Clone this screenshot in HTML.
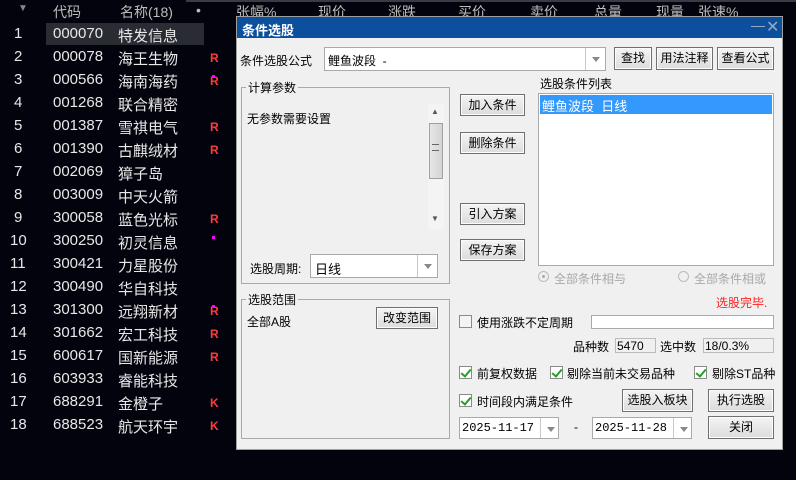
<!DOCTYPE html>
<html><head><meta charset="utf-8"><style>
*{margin:0;padding:0;box-sizing:border-box}
body{width:796px;height:480px;background:#03030d;font-family:"Liberation Sans","Noto Sans CJK SC",sans-serif;font-size:13px;position:relative;overflow:hidden;color:#e6e6e6}
.a{position:absolute;white-space:nowrap}
.hd{color:#bdbdbd;font-size:14px}
.row{position:absolute;left:0;width:236px;height:23px;font-size:15px;color:#e8e8e8}
.row span{position:absolute;top:2px}
.mk{color:#ff3b3b;font-weight:bold;font-size:12px;top:5px!important;left:210px}
.dlg{position:absolute;left:236px;top:16px;width:547px;height:434px;background:#f0f0f0;border:1px solid #a0a0a0;color:#000;font-size:12px}
.btn{position:absolute;border:1px solid #707070;background:linear-gradient(#f4f4f4,#dcdcdc);text-align:center;font-size:12px;color:#000;box-shadow:inset 0 0 0 1px #fcfcfc}
.box{position:absolute;background:#fff;border:1px solid #a9a9a9}
.grp{position:absolute;border:1px solid #a9a9a9}
.lg{position:absolute;background:#f0f0f0;padding:0 2px;top:-9px;left:4px}
.dd{position:absolute;right:0;top:0;bottom:0;width:20px;border-left:1px solid #c8c8c8}
.dd:after{content:"";position:absolute;left:6px;top:9px;border:4px solid transparent;border-top:5px solid #888}
.cb{position:absolute;width:13px;height:13px;border:1px solid #8a8a8a;background:#fff}
.cb.k:after{content:"";position:absolute;left:3px;top:0px;width:4px;height:8px;border:solid #21a121;border-width:0 2px 2px 0;transform:rotate(40deg)}
</style></head><body>
<div class="a" style="left:186px;top:0;width:610px;height:2px;background:#3a3a44"></div>
<div class="a hd" style="left:0;top:3px;width:46px;text-align:center;font-size:10px;color:#888">▼</div>
<div class="a hd" style="left:53px;top:2px">代码</div>
<div class="a hd" style="left:120px;top:2px">名称(18)</div>
<div class="a hd" style="left:196px;top:2px">•</div>
<div class="a hd" style="left:236px;top:2px">张幅%</div>
<div class="a hd" style="left:318px;top:2px">现价</div>
<div class="a hd" style="left:388px;top:2px">涨跌</div>
<div class="a hd" style="left:458px;top:2px">买价</div>
<div class="a hd" style="left:530px;top:2px">卖价</div>
<div class="a hd" style="left:594px;top:2px">总量</div>
<div class="a hd" style="left:656px;top:2px">现量</div>
<div class="a hd" style="left:698px;top:2px">张速%</div>
<div class="a" style="left:46px;top:23px;width:158px;height:22px;background:#2a2c33"></div>
<div class="row" style="top:23px"><span style="left:14px">1</span><span style="left:53px">000070</span><span style="left:118px">特发信息</span></div>
<div class="row" style="top:46px"><span style="left:14px">2</span><span style="left:53px">000078</span><span style="left:118px">海王生物</span><span class="mk">R</span></div>
<div class="row" style="top:69px"><span style="left:14px">3</span><span style="left:53px">000566</span><span style="left:118px">海南海药</span><span class="mk">R</span><span style="left:212px;top:6px;width:3px;height:3px;background:#f0f"></span></div>
<div class="row" style="top:92px"><span style="left:14px">4</span><span style="left:53px">001268</span><span style="left:118px">联合精密</span></div>
<div class="row" style="top:115px"><span style="left:14px">5</span><span style="left:53px">001387</span><span style="left:118px">雪祺电气</span><span class="mk">R</span></div>
<div class="row" style="top:138px"><span style="left:14px">6</span><span style="left:53px">001390</span><span style="left:118px">古麒绒材</span><span class="mk">R</span></div>
<div class="row" style="top:161px"><span style="left:14px">7</span><span style="left:53px">002069</span><span style="left:118px">獐子岛</span></div>
<div class="row" style="top:184px"><span style="left:14px">8</span><span style="left:53px">003009</span><span style="left:118px">中天火箭</span></div>
<div class="row" style="top:207px"><span style="left:14px">9</span><span style="left:53px">300058</span><span style="left:118px">蓝色光标</span><span class="mk">R</span></div>
<div class="row" style="top:230px"><span style="left:10px">10</span><span style="left:53px">300250</span><span style="left:118px">初灵信息</span><span style="left:212px;top:6px;width:3px;height:3px;background:#f0f"></span></div>
<div class="row" style="top:253px"><span style="left:10px">11</span><span style="left:53px">300421</span><span style="left:118px">力星股份</span></div>
<div class="row" style="top:276px"><span style="left:10px">12</span><span style="left:53px">300490</span><span style="left:118px">华自科技</span></div>
<div class="row" style="top:299px"><span style="left:10px">13</span><span style="left:53px">301300</span><span style="left:118px">远翔新材</span><span class="mk">R</span><span style="left:212px;top:6px;width:3px;height:3px;background:#f0f"></span></div>
<div class="row" style="top:322px"><span style="left:10px">14</span><span style="left:53px">301662</span><span style="left:118px">宏工科技</span><span class="mk">R</span></div>
<div class="row" style="top:345px"><span style="left:10px">15</span><span style="left:53px">600617</span><span style="left:118px">国新能源</span><span class="mk">R</span></div>
<div class="row" style="top:368px"><span style="left:10px">16</span><span style="left:53px">603933</span><span style="left:118px">睿能科技</span></div>
<div class="row" style="top:391px"><span style="left:10px">17</span><span style="left:53px">688291</span><span style="left:118px">金橙子</span><span class="mk">K</span></div>
<div class="row" style="top:414px"><span style="left:10px">18</span><span style="left:53px">688523</span><span style="left:118px">航天环宇</span><span class="mk">K</span></div>

<div class="dlg">
<div class="a" style="left:0;top:0;width:545px;height:21px;background:#0c4f9c"></div>
<div class="a" style="left:5px;top:3px;color:#fff;font-weight:bold;font-size:13px">条件选股</div>
<div class="a" style="left:514px;top:9px;width:14px;height:1px;background:#9ab"></div>
<div class="a" style="left:529px;top:0px;color:#9ab;font-size:16px">✕</div>

<div class="a" style="left:3px;top:35px">条件选股公式</div>
<div class="box" style="left:87px;top:30px;width:282px;height:24px"><span class="a" style="left:3px;top:4px">鲤鱼波段 &nbsp;-</span><div class="dd"></div></div>
<div class="btn" style="left:377px;top:30px;width:38px;height:23px;line-height:21px">查找</div>
<div class="btn" style="left:419px;top:30px;width:57px;height:23px;line-height:21px">用法注释</div>
<div class="btn" style="left:480px;top:30px;width:57px;height:23px;line-height:21px">查看公式</div>

<div class="grp" style="left:4px;top:70px;width:209px;height:197px"><span class="lg">计算参数</span></div>
<div class="a" style="left:10px;top:93px">无参数需要设置</div>
<div class="a" style="left:191px;top:87px;width:16px;height:125px;background:#f4f4f4"></div>
<div class="a" style="left:194px;top:90px;font-size:8px;color:#555">▲</div>
<div class="a" style="left:192px;top:106px;width:14px;height:56px;border:1px solid #a0a0a0;background:linear-gradient(90deg,#e6e6e6,#d4d4d4)"></div>
<div class="a" style="left:195px;top:127px;width:7px;height:7px;border-top:1px solid #666;border-bottom:1px solid #666"></div>
<div class="a" style="left:194px;top:197px;font-size:8px;color:#555">▼</div>
<div class="a" style="left:13px;top:243px">选股周期:</div>
<div class="box" style="left:73px;top:237px;width:128px;height:24px"><span class="a" style="left:4px;top:4px;font-size:13px">日线</span><div class="dd"></div></div>

<div class="btn" style="left:223px;top:77px;width:65px;height:22px;line-height:20px">加入条件</div>
<div class="btn" style="left:223px;top:115px;width:65px;height:22px;line-height:20px">删除条件</div>
<div class="btn" style="left:223px;top:186px;width:65px;height:22px;line-height:20px">引入方案</div>
<div class="btn" style="left:223px;top:222px;width:65px;height:22px;line-height:20px">保存方案</div>

<div class="a" style="left:303px;top:58px">选股条件列表</div>
<div class="box" style="left:301px;top:76px;width:236px;height:173px"><div class="a" style="left:1px;top:1px;width:232px;height:19px;background:#3399ff;color:#fff;padding:1px 0 0 2px;font-size:13px">鲤鱼波段 &nbsp;日线</div></div>
<div class="a" style="left:301px;top:254px;width:11px;height:11px;border:1px solid #bbb;border-radius:50%"><div class="a" style="left:3px;top:3px;width:3px;height:3px;background:#aaa;border-radius:50%"></div></div>
<div class="a" style="left:317px;top:253px;color:#a8a8a8;font-size:12px">全部条件相与</div>
<div class="a" style="left:441px;top:254px;width:11px;height:11px;border:1px solid #bbb;border-radius:50%"></div>
<div class="a" style="left:457px;top:253px;color:#a8a8a8;font-size:12px">全部条件相或</div>
<div class="a" style="left:479px;top:277px;color:#ff2020;font-size:12px">选股完毕.</div>

<div class="grp" style="left:4px;top:282px;width:209px;height:140px"><span class="lg">选股范围</span></div>
<div class="a" style="left:10px;top:296px">全部A股</div>
<div class="btn" style="left:139px;top:290px;width:62px;height:22px;line-height:20px">改变范围</div>

<div class="cb" style="left:222px;top:298px;background:#f4f4f4"></div>
<div class="a" style="left:240px;top:297px">使用涨跌不定周期</div>
<div class="box" style="left:354px;top:298px;width:183px;height:14px"></div>
<div class="a" style="left:336px;top:321px">品种数</div>
<div class="box" style="left:378px;top:321px;width:41px;height:15px;background:#f0f0f0;border-color:#bbb"><span class="a" style="left:1px;top:0px">5470</span></div>
<div class="a" style="left:423px;top:321px">选中数</div>
<div class="box" style="left:466px;top:321px;width:71px;height:15px;background:#f0f0f0;border-color:#bbb"><span class="a" style="left:1px;top:0px">18/0.3%</span></div>

<div class="cb k" style="left:222px;top:349px"></div><div class="a" style="left:240px;top:348px">前复权数据</div>
<div class="cb k" style="left:313px;top:349px"></div><div class="a" style="left:330px;top:348px">剔除当前未交易品种</div>
<div class="cb k" style="left:457px;top:349px"></div><div class="a" style="left:475px;top:348px">剔除ST品种</div>
<div class="cb k" style="left:222px;top:377px"></div><div class="a" style="left:240px;top:376px">时间段内满足条件</div>
<div class="btn" style="left:385px;top:372px;width:71px;height:23px;line-height:21px">选股入板块</div>
<div class="btn" style="left:471px;top:372px;width:66px;height:23px;line-height:21px">执行选股</div>
<div class="box" style="left:222px;top:400px;width:100px;height:22px"><span class="a" style="left:2px;top:3px;font-family:'Liberation Mono',monospace;font-size:12px">2025-11-17</span><div class="dd" style="width:18px"></div></div>
<div class="a" style="left:337px;top:403px">-</div>
<div class="box" style="left:355px;top:400px;width:100px;height:22px"><span class="a" style="left:2px;top:3px;font-family:'Liberation Mono',monospace;font-size:12px">2025-11-28</span><div class="dd" style="width:18px"></div></div>
<div class="btn" style="left:471px;top:399px;width:66px;height:23px;line-height:21px">关闭</div>
</div>
</body></html>
